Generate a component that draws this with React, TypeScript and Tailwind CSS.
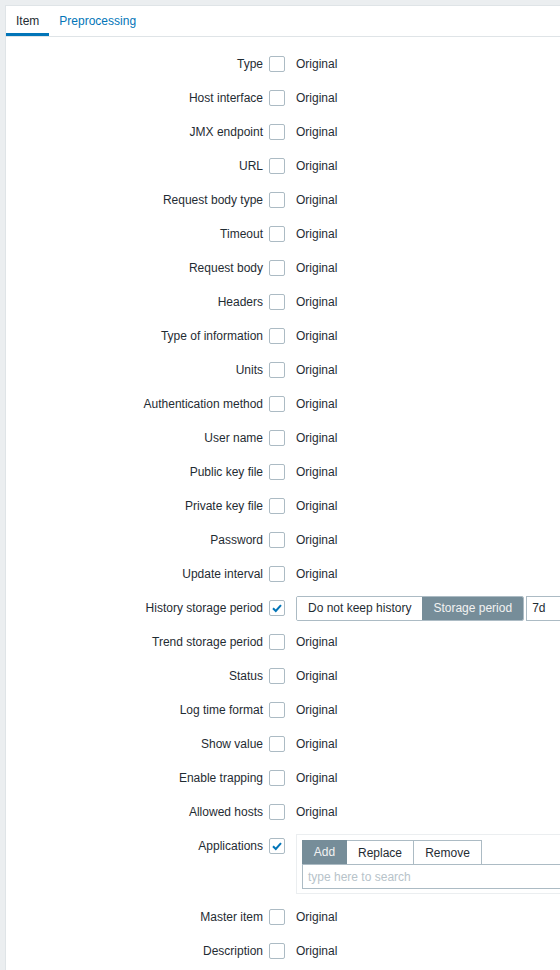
import React from "react";

const labels = [
  "Type",
  "Host interface",
  "JMX endpoint",
  "URL",
  "Request body type",
  "Timeout",
  "Request body",
  "Headers",
  "Type of information",
  "Units",
  "Authentication method",
  "User name",
  "Public key file",
  "Private key file",
  "Password",
  "Update interval",
  "History storage period",
  "Trend storage period",
  "Status",
  "Log time format",
  "Show value",
  "Enable trapping",
  "Allowed hosts",
  "Applications",
  "Master item",
  "Description",
];

function Check({ checked }: { checked?: boolean }) {
  return (
    <span className="w-4 h-4 shrink-0 rounded-[2px] border border-[#acbbc4] bg-white flex items-center justify-center">
      {checked && (
        <svg width="12" height="12" viewBox="0 0 12 12">
          <polyline points="2,6.2 4.8,9 10,3.2" fill="none" stroke="#0275b8" strokeWidth="2" />
        </svg>
      )}
    </span>
  );
}

function HistoryControl() {
  return (
    <div className="flex items-center">
      <div className="flex h-[25px] border border-[#acbbc4] rounded-[2px] overflow-hidden">
        <span className="px-[11px] flex items-center bg-white text-[#1f2c33]">Do not keep history</span>
        <span className="px-[11px] flex items-center bg-[#768d99] text-[#f2f2f2]">Storage period</span>
      </div>
      <div className="ml-[2px] h-[25px] w-[60px] border border-[#acbbc4] flex items-center px-[5px] text-[#1f2c33]">
        7d
      </div>
    </div>
  );
}

function ApplicationsControl() {
  return (
    <div className="w-[300px] border border-[#ebeef0] p-[5px] pb-[4px]">
      <div className="flex">
        <span className="h-[24px] w-[45px] flex items-center justify-center bg-[#768d99] text-[#f2f2f2] border border-[#768d99]">Add</span>
        <span className="h-[24px] w-[67px] flex items-center justify-center bg-white text-[#1f2c33] border border-l-0 border-b-0 border-[#acbbc4]">Replace</span>
        <span className="h-[24px] w-[68px] flex items-center justify-center bg-white text-[#1f2c33] border border-l-0 border-b-0 border-[#acbbc4]">Remove</span>
      </div>
      <div className="h-[25px] border border-[#acbbc4] flex items-center px-[5px] text-[#b7c3ca]">
        type here to search
      </div>
    </div>
  );
}

export default function App() {
  return (
    <div
      className="w-[560px] h-[970px] overflow-hidden bg-[#ebeef0] pt-[5px] pl-[5px] text-[12px] text-[#1f2c33]"
      style={{ fontFamily: '"Liberation Sans", Arial, sans-serif' }}
    >
      <div className="w-[620px] min-h-[970px] bg-white border-l border-t border-[#dfe4e7]">
        {/* tabs */}
        <div className="flex border-b border-[#dfe4e7]">
          <span className="h-[30px] pt-[2px] px-[10px] flex items-center border-b-[3px] border-[#0275b8] text-[#1f2c33]">Item</span>
          <span className="h-[30px] pt-[2px] px-[10px] flex items-center border-b-[3px] border-transparent text-[#0275b8]">Preprocessing</span>
        </div>

        <div className="pt-[10px]">
          {labels.map((label) => {
            if (label === "Applications") {
              return (
                <div key={label} className="flex items-start pt-[5px] pb-[6px]">
                  <span className="w-[257px] text-right leading-[14px] mt-[5px]">{label}</span>
                  <span className="ml-[6px] mt-[4px]">
                    <Check checked />
                  </span>
                  <div className="ml-[11px]">
                    <ApplicationsControl />
                  </div>
                </div>
              );
            }
            const isHistory = label === "History storage period";
            return (
              <div key={label} className="flex items-center h-[34px]">
                <span className="w-[257px] text-right leading-[14px]">{label}</span>
                <span className="ml-[6px]">
                  <Check checked={isHistory} />
                </span>
                <div className="ml-[11px]">
                  {isHistory ? <HistoryControl /> : <span>Original</span>}
                </div>
              </div>
            );
          })}
        </div>
      </div>
    </div>
  );
}
